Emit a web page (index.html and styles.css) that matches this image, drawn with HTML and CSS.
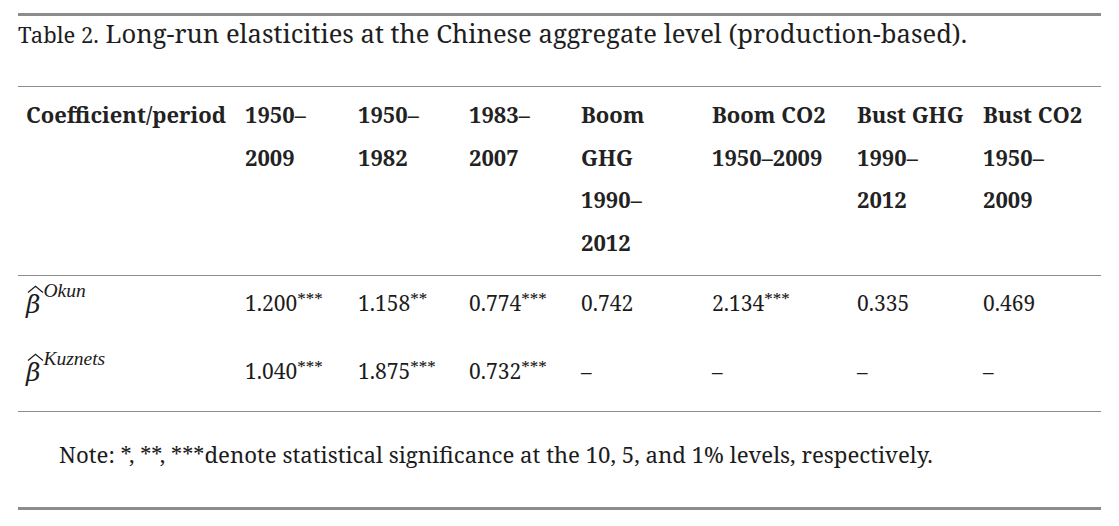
FILE: index.html
```html
<!DOCTYPE html>
<html lang="en">
<head>
<meta charset="utf-8">
<title>Table 2</title>
<link rel="stylesheet" href="styles.css">
</head>
<body>
<div class="figure">
  <div class="caption"><span class="label">Table 2.</span> Long-run elasticities at the Chinese aggregate level (production-based).</div>
  <table class="data">
    <colgroup>
      <col class="c1"><col class="c2"><col class="c3"><col class="c4"><col class="c5"><col class="c6"><col class="c7"><col class="c8">
    </colgroup>
    <thead>
      <tr>
        <th>Coefficient/period</th>
        <th>1950–<br>2009</th>
        <th>1950–<br>1982</th>
        <th>1983–<br>2007</th>
        <th>Boom<br>GHG<br>1990–<br>2012</th>
        <th>Boom CO2<br>1950–2009</th>
        <th>Bust GHG<br>1990–<br>2012</th>
        <th>Bust CO2<br>1950–<br>2009</th>
      </tr>
    </thead>
    <tbody>
      <tr class="r1">
        <td><span class="beta"><span class="hat"><svg width="17" height="8" viewBox="0 0 17 8"><path d="M1 7.5 L8.5 1.2 L16 7.5" fill="none" stroke="#1a1a1a" stroke-width="1.2"/></svg></span>β</span><sup class="idx">Okun</sup></td>
        <td>1.200<sup class="st">***</sup></td>
        <td>1.158<sup class="st">**</sup></td>
        <td>0.774<sup class="st">***</sup></td>
        <td>0.742</td>
        <td>2.134<sup class="st">***</sup></td>
        <td>0.335</td>
        <td>0.469</td>
      </tr>
      <tr class="r2">
        <td><span class="beta"><span class="hat"><svg width="17" height="8" viewBox="0 0 17 8"><path d="M1 7.5 L8.5 1.2 L16 7.5" fill="none" stroke="#1a1a1a" stroke-width="1.2"/></svg></span>β</span><sup class="idx">Kuznets</sup></td>
        <td>1.040<sup class="st">***</sup></td>
        <td>1.875<sup class="st">***</sup></td>
        <td>0.732<sup class="st">***</sup></td>
        <td>–</td>
        <td>–</td>
        <td>–</td>
        <td>–</td>
      </tr>
    </tbody>
  </table>
  <div class="note">Note: *, **, ***denote statistical significance at the 10, 5, and 1% levels, respectively.</div>
</div>
</body>
</html>
```
FILE: styles.css
```css
html, body {
  margin: 0;
  padding: 0;
  background: #ffffff;
}
body {
  font-family: "Noto Serif", "DejaVu Serif", serif;
  color: #1c1c1c;
}
.figure {
  margin: 13px 0 0 18px;
  width: 1083px;
  border-top: 3px solid #8c8c8c;
  border-bottom: 3px solid #8c8c8c;
}
.caption {
  box-sizing: border-box;
  height: 70px;
  font-size: 25.6px;
  line-height: 36px;
  padding: 0;
  white-space: nowrap;
  color: #1e1e1e;
}
.caption .label {
  font-size: 22px;
  line-height: 0;
}
.data {
  width: 1083px;
  table-layout: fixed;
  border-collapse: collapse;
  border-top: 1px solid #8c8c8c;
  border-bottom: 1px solid #8c8c8c;
}
.c1 { width: 219px; }
.c2 { width: 113px; }
.c3 { width: 111px; }
.c4 { width: 112px; }
.c5 { width: 131px; }
.c6 { width: 145px; }
.c7 { width: 126px; }
.c8 { width: 126px; }
.data th {
  text-align: left;
  vertical-align: top;
  font-weight: bold;
  font-size: 22px;
  line-height: 42.6px;
  padding: 6px 0 12px 8px;
  white-space: nowrap;
  color: #222222;
  border-bottom: 1px solid #8c8c8c;
}
.data td {
  text-align: left;
  vertical-align: top;
  font-size: 21px;
  line-height: 24px;
  padding: 15px 0 27px 8px;
  white-space: nowrap;
}
.data .r2 td {
  padding-bottom: 26px;
}
.beta {
  display: inline-block;
  position: relative;
  font-family: "DejaVu Serif", serif;
  font-style: italic;
  font-size: 25px;
  line-height: 24px;
}
.hat {
  position: absolute;
  left: 1px;
  top: -8px;
  line-height: 0;
}
.idx {
  font-family: "Liberation Serif", serif;
  font-style: italic;
  font-size: 19.5px;
  line-height: 0;
  vertical-align: 16px;
  margin-left: 3px;
}
.st {
  font-size: 17px;
  line-height: 0;
  vertical-align: 5px;
}
.note {
  font-size: 22.2px;
  line-height: 30px;
  padding: 28px 0 37px 41px;
  white-space: nowrap;
}
```
